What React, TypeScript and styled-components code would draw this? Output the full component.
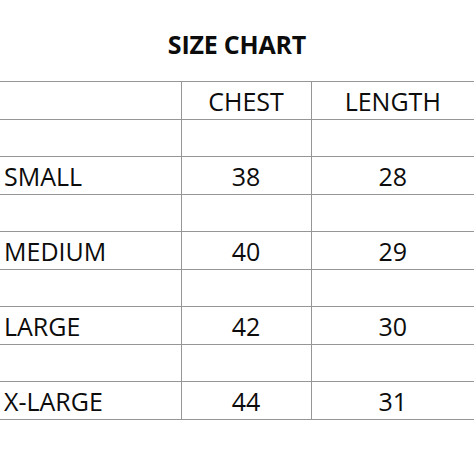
import React, { FC } from "react";
import styled, { createGlobalStyle } from "styled-components";

const rows = [
  { size: "", chest: "", length: "" },
  { size: "SMALL", chest: "38", length: "28" },
  { size: "", chest: "", length: "" },
  { size: "MEDIUM", chest: "40", length: "29" },
  { size: "", chest: "", length: "" },
  { size: "LARGE", chest: "42", length: "30" },
  { size: "", chest: "", length: "" },
  { size: "X-LARGE", chest: "44", length: "31" },
];

const App: FC = () => {
  return (
    <>
      <GlobalStyle />
      <Page>
        <Title>SIZE CHART</Title>
        <Chart>
          <colgroup>
            <col style={{ width: 181 }} />
            <col style={{ width: 130 }} />
            <col />
          </colgroup>
          <thead>
            <tr>
              <Cell as="th" />
              <Cell as="th" $center>
                CHEST
              </Cell>
              <Cell as="th" $center>
                LENGTH
              </Cell>
            </tr>
          </thead>
          <tbody>
            {rows.map((row, i) => (
              <tr key={i}>
                <Cell>{row.size}</Cell>
                <Cell $center>{row.chest}</Cell>
                <Cell $center>{row.length}</Cell>
              </tr>
            ))}
          </tbody>
        </Chart>
      </Page>
    </>
  );
};

const GlobalStyle = createGlobalStyle`
  body {
    margin: 0;
    background: #ffffff;
    font-family: "Open Sans", "Liberation Sans", sans-serif;
    color: #0c0c0c;
  }
`;

const Page = styled.div`
  width: 474px;
  height: 474px;
  overflow: hidden;
  background: #ffffff;
`;

const Title = styled.h1`
  margin: 0;
  padding-top: 28px;
  height: 81px;
  box-sizing: border-box;
  font-size: 25px;
  line-height: 32px;
  font-weight: 700;
  text-align: center;
  letter-spacing: -0.2px;
`;

const Chart = styled.table`
  width: 474px;
  border-collapse: collapse;
  table-layout: fixed;
`;

const Cell = styled.td<{ $center?: boolean }>`
  height: 37.5px;
  padding: 2px 0 0 4px;
  box-sizing: border-box;
  border-top: 1px solid #969696;
  border-bottom: 1px solid #969696;
  border-left: 1px solid #969696;
  font-size: 25px;
  line-height: 34px;
  font-weight: 400;
  text-align: ${(p) => (p.$center ? "center" : "left")};
  white-space: nowrap;
  &:first-child {
    border-left: none;
  }
  ${(p) => p.$center && "padding-left: 0;"}
`;

export default App;
